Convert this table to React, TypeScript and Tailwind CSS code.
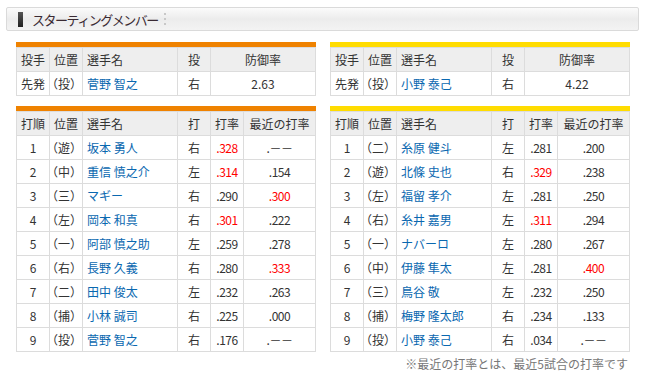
import React from "react";

type Batter = [string, string, string, string, string, string];

const giants: Batter[] = [
  ["1", "（遊）", "坂本 勇人", "右", "r.328", ".－－"],
  ["2", "（中）", "重信 慎之介", "左", "r.314", ".154"],
  ["3", "（三）", "マギー", "右", ".290", "r.300"],
  ["4", "（左）", "岡本 和真", "右", "r.301", ".222"],
  ["5", "（一）", "阿部 慎之助", "左", ".259", ".278"],
  ["6", "（右）", "長野 久義", "右", ".280", "r.333"],
  ["7", "（二）", "田中 俊太", "左", ".232", ".263"],
  ["8", "（捕）", "小林 誠司", "右", ".225", ".000"],
  ["9", "（投）", "菅野 智之", "右", ".176", ".－－"],
];

const tigers: Batter[] = [
  ["1", "（二）", "糸原 健斗", "左", ".281", ".200"],
  ["2", "（遊）", "北條 史也", "右", "r.329", ".238"],
  ["3", "（左）", "福留 孝介", "左", ".281", ".250"],
  ["4", "（右）", "糸井 嘉男", "左", "r.311", ".294"],
  ["5", "（一）", "ナバーロ", "左", ".280", ".267"],
  ["6", "（中）", "伊藤 隼太", "左", ".281", "r.400"],
  ["7", "（三）", "鳥谷 敬", "左", ".232", ".250"],
  ["8", "（捕）", "梅野 隆太郎", "右", ".234", ".133"],
  ["9", "（投）", "小野 泰己", "右", ".034", ".－－"],
];

const td = "border border-[#dcdcdc] h-[24px] p-0 leading-none whitespace-nowrap overflow-hidden";
const th = "border border-[#dcdcdc] h-[24px] p-0 bg-[#eeeeee] font-normal leading-none whitespace-nowrap";
const pos = "[font-feature-settings:'halt']";

function Stat({ v }: { v: string }) {
  // values prefixed with "r" are shown in red
  if (v.startsWith("r")) return <span className="text-[#ff0000]">{v.slice(1)}</span>;
  return <span>{v}</span>;
}

function PitcherTable({ bar, name, era }: { bar: string; name: string; era: string }) {
  return (
    <div className="w-[300px]">
      <div className={`h-[5px] ${bar}`} />
      <table className="w-[300px] table-fixed border-collapse text-[12px] text-[#333]">
        <colgroup>
          <col className="w-[33px]" />
          <col className="w-[33px]" />
          <col className="w-[95px]" />
          <col className="w-[33px]" />
          <col />
        </colgroup>
        <thead>
          <tr>
            <th className={`${th} text-left pl-[4px]`}>投手</th>
            <th className={`${th} text-left pl-[4px]`}>位置</th>
            <th className={`${th} text-left pl-[4px]`}>選手名</th>
            <th className={`${th} text-center`}>投</th>
            <th className={`${th} text-center`}>防御率</th>
          </tr>
        </thead>
        <tbody>
          <tr>
            <td className={`${td} pl-[4px]`}>先発</td>
            <td className={`${td} pl-[2px] ${pos}`}>（投）</td>
            <td className={`${td} pl-[4px] text-[#0a68b0]`}>{name}</td>
            <td className={`${td} text-center`}>右</td>
            <td className={`${td} text-center`}>{era}</td>
          </tr>
        </tbody>
      </table>
    </div>
  );
}

function BattingTable({ bar, rows }: { bar: string; rows: Batter[] }) {
  return (
    <div className="w-[300px]">
      <div className={`h-[5px] ${bar}`} />
      <table className="w-[300px] table-fixed border-collapse text-[12px] text-[#333]">
        <colgroup>
          <col className="w-[33px]" />
          <col className="w-[33px]" />
          <col className="w-[95px]" />
          <col className="w-[33px]" />
          <col className="w-[33px]" />
          <col />
        </colgroup>
        <thead>
          <tr>
            <th className={`${th} text-left pl-[4px]`}>打順</th>
            <th className={`${th} text-left pl-[4px]`}>位置</th>
            <th className={`${th} text-left pl-[4px]`}>選手名</th>
            <th className={`${th} text-center`}>打</th>
            <th className={`${th} text-center`}>打率</th>
            <th className={`${th} text-center`}>最近の打率</th>
          </tr>
        </thead>
        <tbody>
          {rows.map((r) => (
            <tr key={r[0]}>
              <td className={`${td} text-center`}>{r[0]}</td>
              <td className={`${td} pl-[2px] ${pos}`}>{r[1]}</td>
              <td className={`${td} pl-[4px] text-[#0a68b0]`}>{r[2]}</td>
              <td className={`${td} text-center`}>{r[3]}</td>
              <td className={`${td} text-center tracking-[-0.5px]`}>
                <Stat v={r[4]} />
              </td>
              <td className={`${td} text-center tracking-[-0.5px]`}>
                <Stat v={r[5]} />
              </td>
            </tr>
          ))}
        </tbody>
      </table>
    </div>
  );
}

export default function App() {
  return (
    <div
      className="w-[649px] h-[389px] bg-white pt-[7px]"
      style={{ fontFamily: '"Noto Sans CJK JP", "Liberation Sans", sans-serif' }}
    >
      {/* title bar */}
      <div className="mx-[6px] w-[633px] h-[24px] border border-[#dadada] rounded-[2px] bg-gradient-to-b from-[#fbfbfb] via-[#ececec] to-[#f3f3f3] flex items-center pl-[11px]">
        <div className="w-[5px] h-[15px] bg-gradient-to-b from-[#555] to-[#222]" />
        <span className="ml-[9px] text-[13px] text-[#3a2a33] tracking-[-1.5px] leading-none">
          スターティングメンバー
        </span>
        <div className="ml-[6px] flex flex-col gap-[3px]">
          <div className="w-[2px] h-[2px] bg-[#c8c8c8]" />
          <div className="w-[2px] h-[2px] bg-[#c8c8c8]" />
          <div className="w-[2px] h-[2px] bg-[#c8c8c8]" />
        </div>
      </div>

      <div className="flex gap-[14px] pl-[16px] mt-[11px]">
        <PitcherTable bar="bg-[#ef8200]" name="菅野 智之" era="2.63" />
        <PitcherTable bar="bg-[#ffdc00]" name="小野 泰己" era="4.22" />
      </div>

      <div className="flex gap-[14px] pl-[16px] mt-[10px]">
        <BattingTable bar="bg-[#ef8200]" rows={giants} />
        <div>
          <BattingTable bar="bg-[#ffdc00]" rows={tigers} />
          <p className="mt-[6px] text-right pr-[2px] text-[12px] text-[#777] leading-none">
            ※最近の打率とは、最近5試合の打率です
          </p>
        </div>
      </div>
    </div>
  );
}
